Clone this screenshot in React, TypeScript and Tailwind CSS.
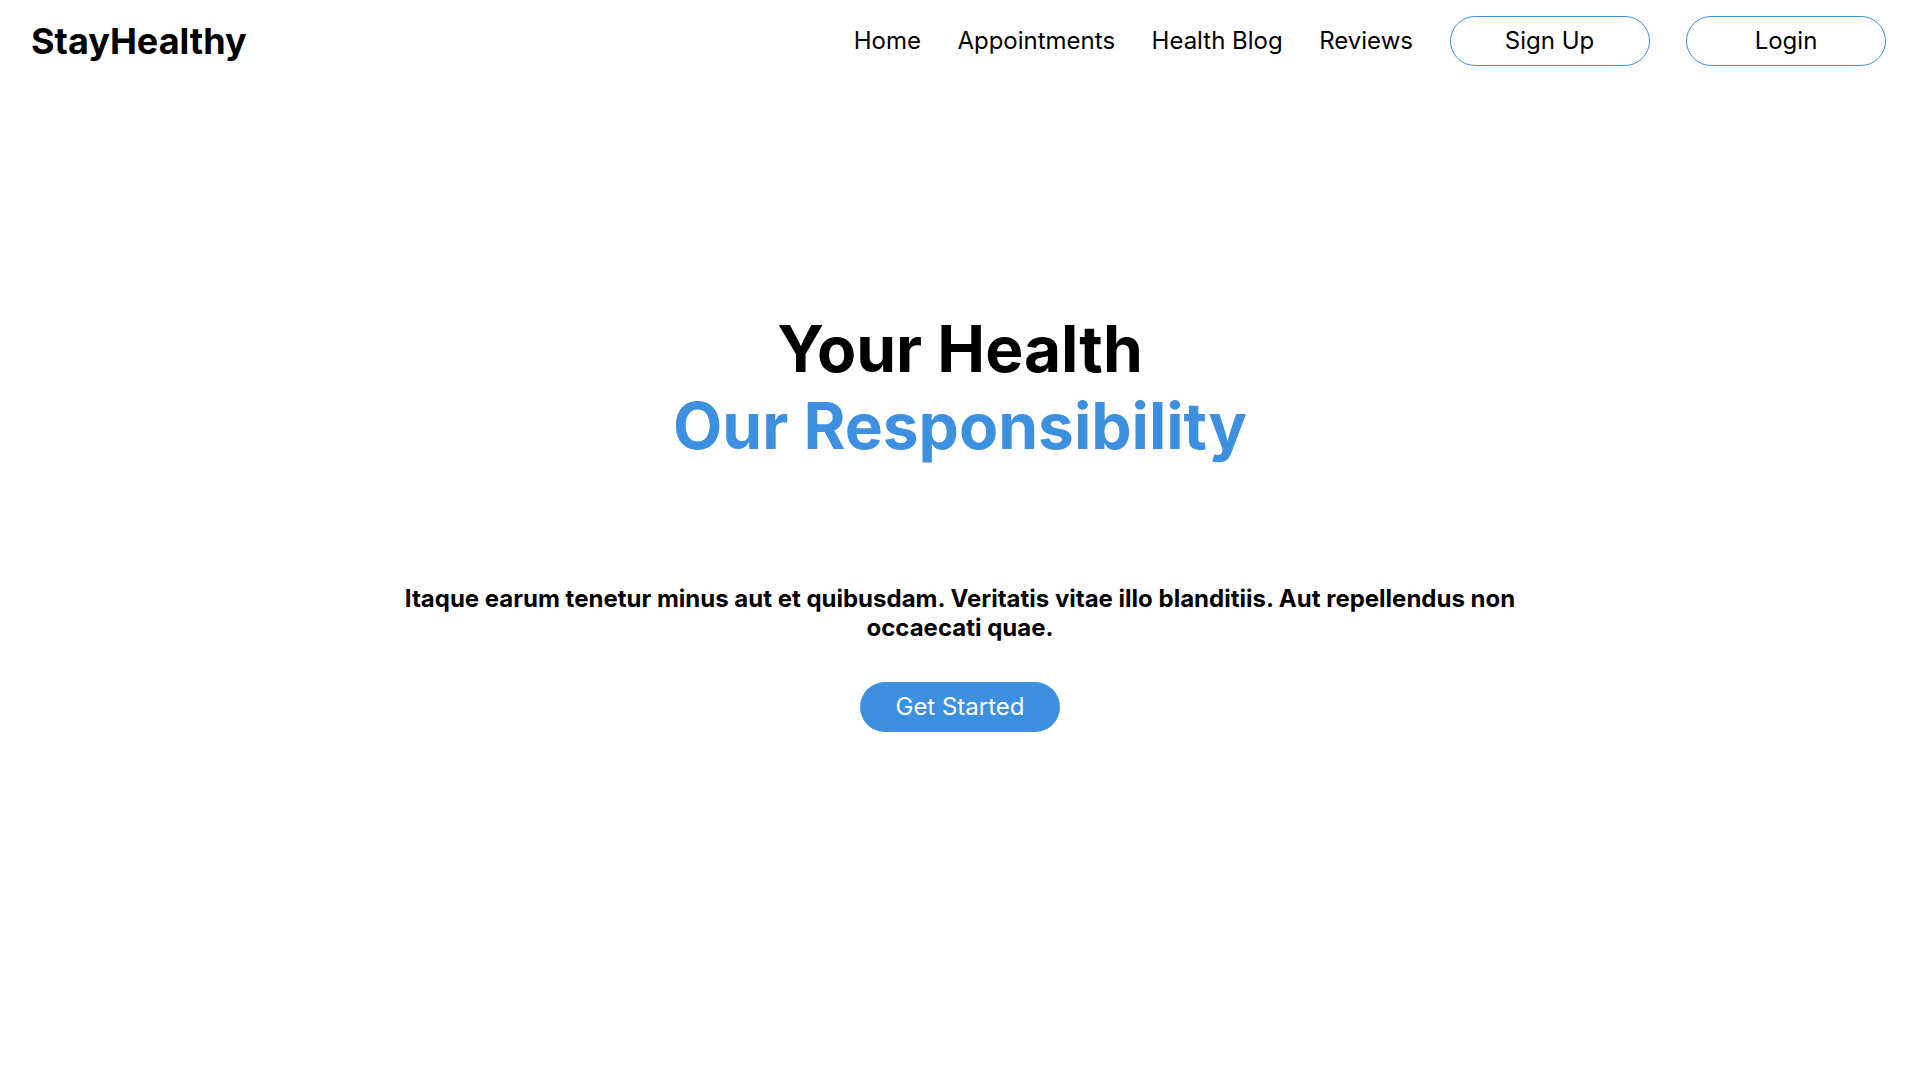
const NAV_LINKS = ["Home", "Appointments", "Health Blog", "Reviews"];

function Navbar() {
  return (
    <nav className="flex h-[82px] items-center justify-between pl-[31px] pr-[34px]">
      <a href="#" className="text-[36px] font-bold leading-none text-black">
        StayHealthy
      </a>
      <ul className="flex items-center gap-[36.5px]">
        {NAV_LINKS.map((link) => (
          <li key={link}>
            <a href="#" className="text-2xl text-black">
              {link}
            </a>
          </li>
        ))}
        <li>
          <button className="h-[50px] w-[200px] rounded-full border border-[#3d8fe0] bg-white text-2xl text-black">
            Sign Up
          </button>
        </li>
        <li>
          <button className="h-[50px] w-[200px] rounded-full border border-[#3d8fe0] bg-white text-2xl text-black">
            Login
          </button>
        </li>
      </ul>
    </nav>
  );
}

function Hero() {
  return (
    <section className="flex flex-col items-center pt-[228px] text-center">
      <h1 className="text-[64px] font-bold leading-[1.21] text-black">
        Your Health
        <br />
        <span className="text-[#3d8fe0]">Our Responsibility</span>
      </h1>
      <p className="mt-[119px] max-w-[1150px] text-2xl leading-[29px] font-bold text-black">
        Itaque earum tenetur minus aut et quibusdam. Veritatis vitae illo
        blanditiis. Aut repellendus non occaecati quae.
      </p>
      <button className="mt-[40px] h-[50px] w-[200px] rounded-full bg-[#3d8fe0] text-2xl text-white">
        Get Started
      </button>
    </section>
  );
}

export default function App() {
  return (
    <div className="min-h-screen bg-white font-['Inter',sans-serif]">
      <Navbar />
      <Hero />
    </div>
  );
}
